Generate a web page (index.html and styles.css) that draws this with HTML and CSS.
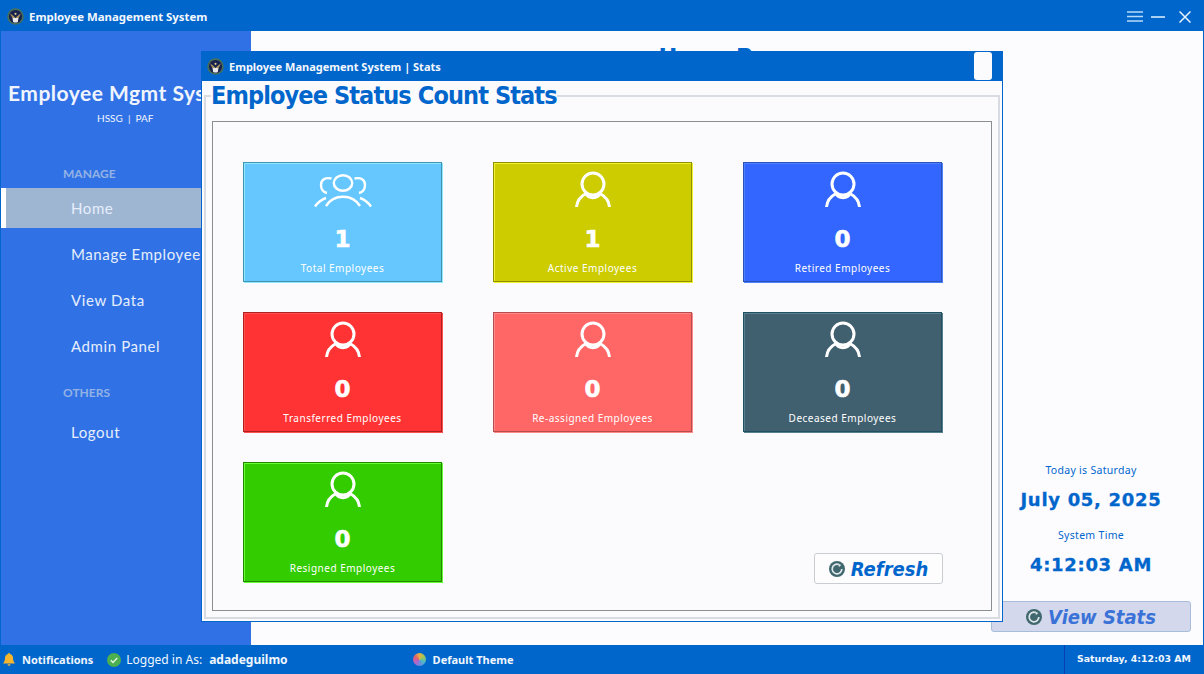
FILE: index.html
```html
<!DOCTYPE html>
<html>
<head>
	<meta charset="utf-8">
	<title>Employee Management System</title>
	<link rel="stylesheet" href="styles.css">
</head>
<body>
	<svg class="defs" width="0" height="0">
		<symbol id="logo" viewBox="0 0 16 16">
			<circle cx="8" cy="8" r="7.8" fill="#47705a"/>
			<circle cx="8" cy="8" r="6.200" fill="#18224e"/>
			<path d="M5.200 9.500h5.600l-.6 3.600a5.500 5.500 0 0 1-4.400 0z" fill="#e8e8e8"/>
			<path d="M2.800 5l3.700 2.800L8 9.500l1.500-1.700L13.200 5l-2.200 4.500H5z" fill="#a8975f"/>
			<circle cx="8" cy="5.500" r="1" fill="#d9c98c"/>
		</symbol>
		<symbol id="person" viewBox="0 0 40 40">
			<g fill="none" stroke="#fff" stroke-width="3">
				<circle cx="20" cy="14" r="11"/>
				<path d="M3.500 37c.5-6 4-10.500 9.500-13.500"/>
				<path d="M36.500 37c-.5-6-4-10.500-9.500-13.500"/>
				<path d="M13 23.500c2 5.500 12 5.500 14 0"/>
			</g>
		</symbol>
		<symbol id="people" viewBox="0 0 60 40">
			<g fill="none" stroke="#fff" stroke-width="2.400">
				<ellipse cx="30" cy="13" rx="9.200" ry="7.800"/>
				<path d="M18.500 8.500C12 7 8 10 8 15c0 4 2 7 6 8"/>
				<path d="M41.500 8.500C48 7 52 10 52 15c0 4-2 7-6 8"/>
				<path d="M13 36c4-6.500 9-9.300 17-9.300S43 29.500 47 36"/>
				<path d="M2 36.500c2.500-3.500 6-6.800 11-8.500"/>
				<path d="M58 36.500c-2.500-3.500-6-6.800-11-8.500"/>
			</g>
		</symbol>
		<symbol id="reload" viewBox="0 0 16 16">
			<circle cx="8" cy="8" r="8" fill="#41686f"/>
			<path d="M9.600 3.500a4.800 4.800 0 1 0 3.200 4.500" fill="none" stroke="#dfe8ea" stroke-width="1.700"/>
			<path d="M9 2.500l3.300 1.600-2.300 2z" fill="#dfe8ea"/>
		</symbol>
	</svg>

	<div class="app">
		<header class="titlebar">
			<svg class="logo"><use href="#logo"/></svg>
			<span class="app-name">Employee Management System</span>
			<div class="win-controls">
				<svg class="ctl-menu" width="16" height="11" viewBox="0 0 16 11"><path d="M0 1h16M0 5.500h16M0 10h16" stroke="#b7dcf7" stroke-width="1.300"/></svg>
				<svg class="ctl-min" width="14" height="2" viewBox="0 0 14 2"><path d="M0 1h14" stroke="#d5eafa" stroke-width="1.600"/></svg>
				<svg class="ctl-close" width="12" height="12" viewBox="0 0 12 12"><path d="M.5.5l11 11M11.500.5l-11 11" stroke="#e6f3fc" stroke-width="1.500"/></svg>
			</div>
		</header>

		<div class="body">
			<aside class="sidebar">
				<div class="brand">Employee Mgmt System</div>
				<div class="org">HSSG &nbsp;|&nbsp; PAF</div>

				<div class="side-label manage">MANAGE</div>
				<a class="nav active">Home</a>
				<a class="nav">Manage Employees</a>
				<a class="nav">View Data</a>
				<a class="nav">Admin Panel</a>
				<div class="side-label others">OTHERS</div>
				<a class="nav">Logout</a>
			</aside>

			<main class="content">
				<h1 class="page-title">Home Page</h1>
				<div class="clock">
					<div class="clock-label">Today is Saturday</div>
					<div class="clock-value">July 05, 2025</div>
					<div class="clock-label time-label">System Time</div>
					<div class="clock-value">4:12:03 AM</div>
					<button class="btn-stats"><svg class="btn-icon"><use href="#reload"/></svg>View Stats</button>
				</div>
			</main>
		</div>

		<footer class="statusbar">
			<svg class="st-bell" width="12" height="13" viewBox="0 0 12 13"><path d="M6 0c.7 0 1 .5 1 1 2 .5 3 2 3 4 0 3 1 4 2 5.500H0C1 9 2 8 2 5c0-2 1-3.500 3-4 0-.5.300-1 1-1z" fill="#f5b52e"/><path d="M4.500 11.300h3a1.500 1.500 0 0 1-3 0z" fill="#f5b52e"/></svg>
			<span class="st-strong st-notify">Notifications</span>
			<svg class="st-check" width="14" height="14" viewBox="0 0 14 14"><circle cx="7" cy="7" r="7" fill="#4caf50"/><path d="M3.800 7.200l2.200 2.200 4.200-4.400" fill="none" stroke="#e6f5e6" stroke-width="1.400"/></svg>
			<span class="st-login">Logged in As:</span>
			<span class="st-user">adadeguilmo</span>
			<span class="st-wheel"></span>
			<span class="st-strong">Default Theme</span>
			<span class="st-time">Saturday, 4:12:03 AM</span>
		</footer>
	</div>

	<section class="dialog">
		<div class="dialog-bar">
			<svg class="logo"><use href="#logo"/></svg>
			<span class="dialog-name">Employee Management System | Stats</span>
			<span class="dialog-close"></span>
		</div>
		<fieldset class="stats-group">
			<legend>Employee Status Count Stats</legend>
			<div class="panel">
				<div class="card sky"><svg class="icon-people"><use href="#people"/></svg><b>1</b><span>Total Employees</span></div>
				<div class="card olive"><svg class="icon-person"><use href="#person"/></svg><b>1</b><span>Active Employees</span></div>
				<div class="card blue"><svg class="icon-person"><use href="#person"/></svg><b>0</b><span>Retired Employees</span></div>
				<div class="card red"><svg class="icon-person"><use href="#person"/></svg><b>0</b><span>Transferred Employees</span></div>
				<div class="card salmon"><svg class="icon-person"><use href="#person"/></svg><b>0</b><span>Re-assigned Employees</span></div>
				<div class="card slate"><svg class="icon-person"><use href="#person"/></svg><b>0</b><span>Deceased Employees</span></div>
				<div class="card green"><svg class="icon-person"><use href="#person"/></svg><b>0</b><span>Resigned Employees</span></div>
				<button class="btn-refresh"><svg class="btn-icon"><use href="#reload"/></svg>Refresh</button>
			</div>
		</fieldset>
	</section>
</body>
</html>
```

FILE: styles.css
```css
* {
	box-sizing: border-box;
}
html, body {
	margin: 0;
	height: 100%;
	overflow: hidden;
}
body {
	background: #0066cc;
	font-family: "Noto Sans", Tahoma, sans-serif;
	color: #0066cc;
}
.defs {
	position: absolute;
}
.app {
	display: flex;
	flex-direction: column;
	height: 674px;
}

/* title bar */
.titlebar {
	display: flex;
	align-items: center;
	height: 31px;
	padding: 2px 13px 0 7px;
	color: #f4f8fd;
}
.logo {
	width: 17px;
	height: 17px;
	flex: none;
}
.app-name {
	margin-left: 5px;
	font-size: 11.400px;
	font-weight: 700;
}
.win-controls {
	display: flex;
	align-items: center;
	margin-left: auto;
}
.ctl-menu {
	margin-right: 8px;
}
.ctl-min {
	margin-right: 14px;
}

/* main area */
.body {
	display: flex;
	flex: 1;
	min-height: 0;
	padding: 0 1px;
}
.sidebar {
	width: 250px;
	flex: none;
	padding-top: 48px;
	background: #3072e6;
	color: #f0f5fd;
	font-family: Lato, sans-serif;
	overflow: hidden;
}
.brand {
	padding-left: 7px;
	font-size: 21px;
	font-weight: 700;
	letter-spacing: 0.5px;
	line-height: 28px;
	white-space: nowrap;
}
.org {
	margin-top: 4px;
	padding-left: 96px;
	font-size: 10px;
	line-height: 14px;
}
.side-label {
	padding-left: 62px;
	font-size: 12px;
	font-weight: 700;
	line-height: 14px;
	color: #93b2e4;
}
.manage {
	margin-top: 42px;
}
.others {
	margin-top: 17px;
	margin-bottom: 9px;
}
.nav {
	display: block;
	height: 46px;
	padding-left: 70px;
	color: #e6eefb;
	font-size: 15px;
	line-height: 46px;
	letter-spacing: 0.6px;
	white-space: nowrap;
}
.nav.active {
	height: 40px;
	margin-top: 7px;
	margin-bottom: 3px;
	padding-left: 65px;
	border-left: 5px solid #fff;
	background: #9fb6d3;
	line-height: 40px;
}
.content {
	display: flex;
	flex: 1;
	flex-direction: column;
	background: #fcfcff;
}
.page-title {
	margin: 12px 0 0;
	font-family: "DejaVu Sans", Tahoma, sans-serif;
	font-stretch: condensed;
	font-size: 25px;
	letter-spacing: -0.7px;
	line-height: 30px;
	font-weight: 700;
	text-align: center;
}
.clock {
	display: flex;
	flex-direction: column;
	align-items: center;
	width: 200px;
	margin: auto 12px 13px auto;
}
.clock-label {
	font-size: 10.500px;
	line-height: 14px;
	letter-spacing: 0.3px;
}
.time-label {
	margin-top: 16px;
}
.clock-value {
	margin-top: 11px;
	font-family: "DejaVu Sans", Verdana, sans-serif;
	font-size: 18px;
	font-weight: 700;
	line-height: 24px;
	letter-spacing: 0.7px;
	-webkit-text-stroke: 0.3px #0066cc;
}
.btn-icon {
	width: 16px;
	height: 16px;
	margin-right: 6px;
}
.btn-stats, .btn-refresh {
	display: flex;
	align-items: center;
	justify-content: center;
	font-family: "DejaVu Sans", Verdana, sans-serif;
	font-stretch: condensed;
	font-weight: 700;
	font-style: italic;
	font-size: 20px;
	padding: 0;
	border-radius: 3px;
}
.btn-stats {
	width: 200px;
	height: 31px;
	margin-top: 24px;
	background: #d3d8ec;
	border: 1px solid #a6bcd9;
	color: #3a72d8;
}

/* status bar */
.statusbar {
	display: flex;
	align-items: center;
	height: 29px;
	padding-left: 3px;
	font-size: 11px;
	color: #f0f6fc;
}
.st-strong {
	font-weight: 700;
}
.st-notify {
	margin-left: 7px;
}
.st-check {
	margin-left: 14px;
}
.st-login {
	margin-left: 5px;
	font-size: 12px;
}
.st-user {
	margin-left: 7px;
	font-size: 12px;
	font-weight: 700;
}
.st-wheel {
	width: 13px;
	height: 13px;
	margin-left: 125px;
	margin-right: 7px;
	border-radius: 50%;
	background: conic-gradient(#e8b040, #9ac85a, #4db8c8, #7088e0, #c060c0, #e06070, #e8b040);
}
.st-time {
	align-self: stretch;
	width: 140px;
	margin-left: auto;
	padding-left: 12px;
	border-left: 1px solid #0a3fb4;
	font-family: "DejaVu Sans", Verdana, sans-serif;
	font-size: 9.400px;
	font-weight: 700;
	line-height: 28px;
}

/* stats window, floats over the main one */
.dialog {
	position: absolute;
	left: 201px;
	top: 51px;
	width: 802px;
	height: 571px;
	background: #fbfbfe;
	border: 1px solid #0066cc;
	border-top: 0;
	box-shadow: 0 0 0 1px #fff inset;
}
.dialog-bar {
	display: flex;
	align-items: center;
	height: 30px;
	margin: 0 -1px;
	padding: 0 11px 0 6px;
	background: #0066cc;
	color: #f4f8fd;
}
.dialog-name {
	margin-left: 5px;
	font-size: 11px;
	font-weight: 700;
}
.dialog-close {
	width: 18px;
	height: 28px;
	margin-left: auto;
	background: #fbfbfe;
	border-radius: 3px;
}
.stats-group {
	height: 538px;
	margin: 0 2px 0 2px;
	padding: 0 6px 6px 6px;
	border: 2px solid #d8dce2;
	min-width: 0;
}
.stats-group legend {
	margin-left: -1px;
	padding: 0;
	font-family: "DejaVu Sans", Tahoma, sans-serif;
	font-stretch: condensed;
	font-size: 25px;
	font-weight: 700;
	line-height: 30px;
	letter-spacing: -0.9px;
}
.panel {
	display: grid;
	grid-template-columns: repeat(3, 199px);
	grid-auto-rows: 120px;
	column-gap: 51px;
	row-gap: 30px;
	height: 490px;
	margin-top: 10px;
	padding: 40px 0 0 30px;
	border: 1px solid #8b8f94;
}
.card {
	display: flex;
	flex-direction: column;
	align-items: center;
	background: var(--fill);
	border: 1px solid var(--edge);
	box-shadow: 1px 1px 0 var(--glow), inset 1px 1px 0 var(--glow);
	color: #fff;
}
.card b {
	margin-top: 14px;
	font-family: "DejaVu Sans", Verdana, sans-serif;
	font-size: 23px;
	font-weight: 700;
	line-height: 30px;
	-webkit-text-stroke: 0.6px #fff;
}
.card span {
	margin-top: 7px;
	font-size: 10px;
	line-height: 14px;
	letter-spacing: 0.5px;
}
.icon-person {
	width: 40px;
	height: 40px;
	margin-top: 7px;
}
.icon-people {
	width: 60px;
	height: 40px;
	margin-top: 7px;
}
.sky { --fill: #66c7ff; --edge: #3d94b5; --glow: #90e8ff; }
.olive { --fill: #cccc00; --edge: #8f8f00; --glow: #f2f22e; }
.blue { --fill: #3366ff; --edge: #2a52b8; --glow: #4d80ff; }
.red { --fill: #ff3333; --edge: #b02020; --glow: #ff5050; }
.salmon { --fill: #ff6666; --edge: #b84c4c; --glow: #ff8a8a; }
.slate { --fill: #41606f; --edge: #20505f; --glow: #56808f; }
.green { --fill: #33cc00; --edge: #228800; --glow: #66ff33; }

.btn-refresh {
	grid-column: 3;
	align-self: end;
	justify-self: end;
	width: 129px;
	height: 31px;
	margin: 0 -1px -2px 0;
	background: #fdfdfe;
	border: 1px solid #c9cdd2;
	color: #0066cc;
}
```
